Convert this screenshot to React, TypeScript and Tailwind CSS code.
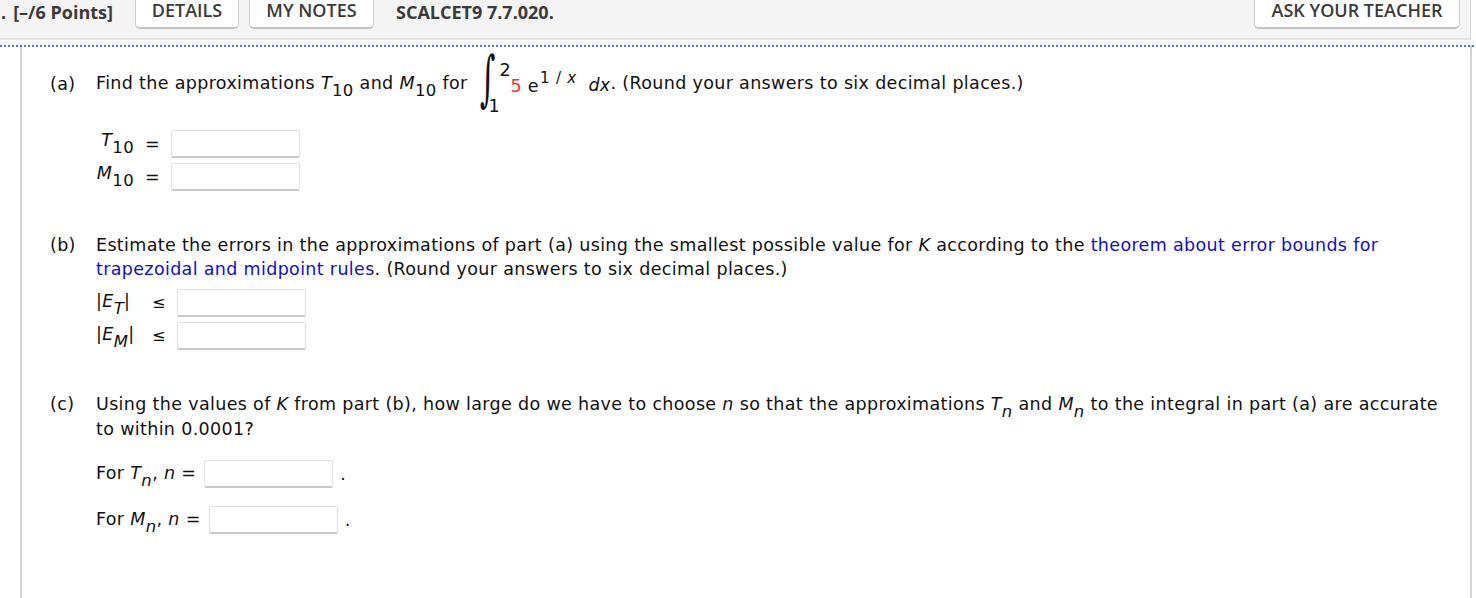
import React from 'react';

const body = "font-['DejaVu_Sans',Verdana,sans-serif]";

const Sub: React.FC<{ children: React.ReactNode }> = ({ children }) => (
  <span className="relative top-[7px] not-italic text-[16.5px]">{children}</span>
);

const Input: React.FC<{ className?: string }> = ({ className = '' }) => (
  <div className={`h-[28px] w-[129px] bg-white border border-[#e2e2e2] border-b-2 border-b-[#c9c9c9] rounded-[2px] ${className}`} />
);

const TabButton: React.FC<{ label: string; className?: string }> = ({ label, className = '' }) => (
  <div
    className={`h-[30px] -mt-[1px] flex items-center justify-center bg-white border border-t-0 border-[#cdcdcd] border-b-2 border-b-[#c4c4c4] rounded-b-[5px] text-[18px] font-semibold text-[#3a3a3a] ${className}`}
  >
    <span className="-mt-[6px]">{label}</span>
  </div>
);

const Integral: React.FC = () => (
  <span className="relative inline-block w-[37px] h-[50px] align-middle -mt-[6px]">
    <span className="absolute left-[3px] top-0 text-[44px] leading-none font-['DejaVu_Serif',serif] scale-y-[1.37] scale-x-[0.68] origin-center">∫</span>
    <span className="absolute left-[26px] top-[6px] text-[17.5px] leading-none">2</span>
    <span className="absolute left-[15px] bottom-[-9px] text-[17.5px] leading-none">1</span>
  </span>
);

export default function App() {
  return (
    <div className="w-[1476px] h-[598px] overflow-hidden bg-white font-['Open_Sans',sans-serif]">
      <div className="flex items-start w-[1471px] h-[40px] bg-[#f4f4f4] border-b-2 border-[#e3e3e3] border-r border-r-[#d6d6d6]">
        <span className="text-[18px] font-bold text-[#3a3a3a] ml-[1px] -mt-[1px] leading-[26px]">.</span>
        <span className="text-[18px] font-bold text-[#3a3a3a] ml-[7px] -mt-[1px] leading-[26px]">[–/6 Points]</span>
        <TabButton label="DETAILS" className="ml-[22px] w-[104px]" />
        <TabButton label="MY NOTES" className="ml-[10px] w-[125px]" />
        <span className="text-[18px] font-bold text-[#3a3a3a] ml-[22px] -mt-[1px] leading-[26px]">SCALCET9 7.7.020.</span>
        <div className="flex-1" />
        <TabButton label="ASK YOUR TEACHER" className="w-[206px] mr-[10px]" />
      </div>

      <div className={`ml-[20px] w-[1452px] h-[558px] border-l-2 border-r-2 border-[#d2d2d2] text-[17.5px] tracking-[0.34px] text-[#111] ${body}`}>
        <div className="mt-[5px] -ml-[22px] w-[1476px] h-[2px] bg-[repeating-linear-gradient(90deg,#3f7fdc_0_2px,transparent_2px_4px)]" />

        {/* part a */}
        <div className="flex items-center h-[50px] mt-[12px] pl-[28px] whitespace-nowrap">
          <span className="w-[46px]">(a)</span>
          <span>
            Find the approximations <i>T</i>
            <Sub>10</Sub> and <i>M</i>
            <Sub>10</Sub> for <Integral />
            <span className="relative top-[3px]">
              <span className="text-[#e8372c]">5</span> e
              <span className="relative -top-[9px] text-[15px] ml-[1px]">
                1<span className="mx-[6px]">/</span>
                <i>x</i>
              </span>
            </span>{' '}
            <i className="relative top-[2px] ml-[6px]">dx</i>. (Round your answers to six decimal places.)
          </span>
        </div>

        <div className="pl-[74px] mt-[21px] flex flex-col gap-[5px]">
          <div className="flex items-center h-[28px]">
            <span className="w-[38px] text-right -mt-[7px]">
              <i>T</i>
              <Sub>10</Sub>
            </span>
            <span className="w-[37px] text-center">=</span>
            <Input />
          </div>
          <div className="flex items-center h-[28px]">
            <span className="w-[38px] text-right -mt-[7px]">
              <i>M</i>
              <Sub>10</Sub>
            </span>
            <span className="w-[37px] text-center">=</span>
            <Input />
          </div>
        </div>

        {/* part b */}
        <div className="flex mt-[42px] pl-[28px] leading-[24px] whitespace-nowrap">
          <span className="w-[46px]">(b)</span>
          <div>
            <div>
              Estimate the errors in the approximations of part (a) using the smallest possible value for <i>K</i> according to the{' '}
              <span className="text-[#1010c8]">theorem about error bounds for</span>
            </div>
            <div>
              <span className="text-[#1010c8]">trapezoidal and midpoint rules</span>. (Round your answers to six decimal places.)
            </div>
          </div>
        </div>

        <div className="pl-[74px] mt-[8px] flex flex-col gap-[5px]">
          <div className="flex items-center h-[28px]">
            <span className="w-[56px] -mt-[4px]">
              |<i>E</i>
              <Sub>
                <i>T</i>
              </Sub>
              |
            </span>
            <span className="w-[25px] text-[16px]">≤</span>
            <Input />
          </div>
          <div className="flex items-center h-[28px]">
            <span className="w-[56px] -mt-[4px]">
              |<i>E</i>
              <Sub>
                <i>M</i>
              </Sub>
              |
            </span>
            <span className="w-[25px] text-[16px]">≤</span>
            <Input />
          </div>
        </div>

        {/* part c */}
        <div className="flex mt-[42px] pl-[28px] leading-[24px] whitespace-nowrap">
          <span className="w-[46px]">(c)</span>
          <div>
            <div>
              Using the values of <i>K</i> from part (b), how large do we have to choose <i>n</i> so that the approximations <i>T</i>
              <Sub>
                <i>n</i>
              </Sub>{' '}
              and <i>M</i>
              <Sub>
                <i>n</i>
              </Sub>{' '}
              to the integral in part (a) are accurate
            </div>
            <div>to within 0.0001?</div>
          </div>
        </div>

        <div className="pl-[74px] mt-[19px] flex flex-col gap-[18px]">
          <div className="flex items-center h-[28px] whitespace-nowrap">
            <span className="-mt-[2px]">
              For <i>T</i>
              <Sub>
                <i>n</i>
              </Sub>
              , <i>n</i> =
            </span>
            <Input className="ml-[8px]" />
            <span className="ml-[7px]">.</span>
          </div>
          <div className="flex items-center h-[28px] whitespace-nowrap">
            <span className="-mt-[2px]">
              For <i>M</i>
              <Sub>
                <i>n</i>
              </Sub>
              , <i>n</i> =
            </span>
            <Input className="ml-[8px]" />
            <span className="ml-[7px]">.</span>
          </div>
        </div>
      </div>
    </div>
  );
}
